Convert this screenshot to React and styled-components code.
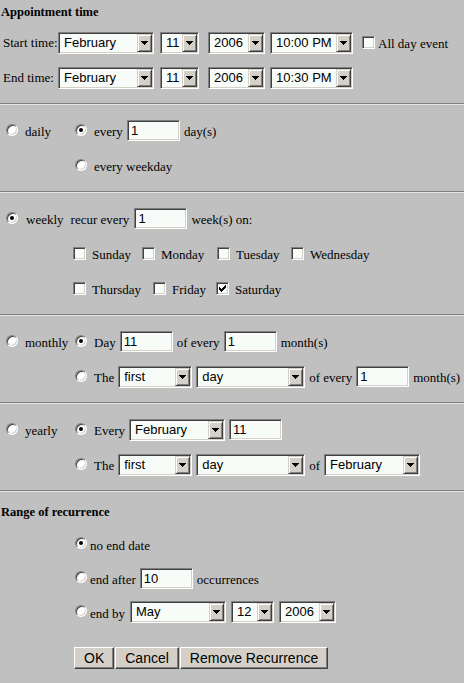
import React from 'react';
import styled, { createGlobalStyle } from 'styled-components';

const Global = createGlobalStyle`
  html, body { margin: 0; padding: 0; background: #c0c0c0; }
  body {
    font-family: "Liberation Serif", "Times New Roman", serif;
    font-size: 13px;
    color: #000;
  }
`;

const Page = styled.div`
  width: 464px;
  min-height: 683px;
  background: #c0c0c0;
  overflow: hidden;
`;

const Title = styled.div`
  height: ${(p) => p.$h || 25}px;
  display: flex;
  align-items: center;
  padding-left: 1px;
  font-weight: bold;
  font-size: 12.5px;
`;

const Row = styled.div`
  display: flex;
  align-items: center;
  height: ${(p) => p.$h || 35}px;
  padding-left: ${(p) => p.$pl || 0}px;
  gap: ${(p) => (p.$gap === undefined ? 4 : p.$gap)}px;
`;

const TimeLabel = styled.span`
  width: 58px;
  box-sizing: border-box;
  padding-left: 3px;
  white-space: nowrap;
`;

const Txt = styled.span`
  white-space: nowrap;
  padding-top: 3px;
  margin-left: ${(p) => p.$ml || 0}px;
`;

const Divider = styled.div`
  height: 0;
  margin: 8px 0;
  border-top: 1px solid #808080;
  border-bottom: 1px solid #e6e6e6;
`;

const sunken = `
  box-sizing: border-box;
  border-top: 1px solid #808080;
  border-left: 1px solid #808080;
  border-bottom: 1px solid #ffffff;
  border-right: 1px solid #ffffff;
  box-shadow: inset 1px 1px 0 #404040, inset -1px -1px 0 #d4d0c8;
`;

const SelectBox = styled.div`
  ${sunken}
  display: flex;
  flex: none;
  width: ${(p) => p.$w}px;
  height: 22px;
  padding: 1px;
  margin-left: ${(p) => p.$ml || 0}px;
  background: #f8fcf8;
`;

const SelectValue = styled.span`
  flex: 1;
  padding-left: 4px;
  font-family: "Liberation Sans", Arial, sans-serif;
  font-size: 13px;
  line-height: 18px;
  white-space: nowrap;
  overflow: hidden;
`;

const ArrowButton = styled.span`
  flex: none;
  width: 15px;
  height: 18px;
  box-sizing: border-box;
  background: #d4d0c8;
  border-top: 1px solid #d4d0c8;
  border-left: 1px solid #d4d0c8;
  border-right: 1px solid #404040;
  border-bottom: 1px solid #404040;
  box-shadow: inset 1px 1px 0 #ffffff, inset -1px -1px 0 #808080;
  display: flex;
  align-items: center;
  justify-content: center;
`;

const TextInput = styled.input`
  ${sunken}
  flex: none;
  width: ${(p) => p.$w || 53}px;
  height: 21px;
  margin: 0;
  margin-left: ${(p) => p.$ml || 0}px;
  padding: 0 0 0 3px;
  background: #f8fcf8;
  font-family: "Liberation Sans", Arial, sans-serif;
  font-size: 13px;
  color: #000;
  outline: none;
`;

const RadioDot = styled.span`
  position: relative;
  flex: none;
  width: 12px;
  height: 12px;
  box-sizing: border-box;
  border-radius: 50%;
  background: #ffffff;
  border: 1px solid;
  border-color: #808080 #ffffff #ffffff #808080;
  box-shadow: inset 1px 1px 0 #404040, inset -1px -1px 0 #d4d0c8;
  margin-right: ${(p) => (p.$mr === undefined ? 3 : p.$mr)}px;
  margin-bottom: 2px;
  &::after {
    content: '';
    display: ${(p) => (p.$checked ? 'block' : 'none')};
    position: absolute;
    left: 3px;
    top: 3px;
    width: 4px;
    height: 4px;
    border-radius: 50%;
    background: #000;
  }
`;

const CheckBoxBox = styled.span`
  ${sunken}
  flex: none;
  width: 13px;
  height: 13px;
  background: #f8fcf8;
  margin-left: ${(p) => p.$ml || 0}px;
  display: flex;
  align-items: center;
  justify-content: center;
`;

const Pattern = styled.div`
  display: grid;
  grid-template-columns: 75px 1fr;
`;

const Kind = styled.div`
  display: flex;
  align-items: center;
  height: 35px;
  padding-left: 6px;
  gap: 7px;
`;

const Options = styled.div`
  display: flex;
  flex-direction: column;
`;

const DayRow = styled.div`
  display: flex;
  align-items: center;
  height: 35px;
  padding-left: 73px;
`;

const DayItem = styled.span`
  display: flex;
  align-items: center;
  gap: 6px;
  flex: none;
  width: ${(p) => (p.$w ? `${p.$w}px` : 'auto')};
`;

const ButtonRow = styled.div`
  display: flex;
  gap: 1px;
  padding-left: 74px;
  margin-top: 18px;
`;

const Button = styled.button`
  height: 22px;
  box-sizing: border-box;
  padding: 0 9px;
  margin: 0;
  background: #d4d0c8;
  border: 1px solid;
  border-color: #ffffff #404040 #404040 #ffffff;
  box-shadow: inset -1px -1px 0 #808080, inset 1px 1px 0 #d4d0c8;
  font-family: "Liberation Sans", Arial, sans-serif;
  font-size: 14px;
  color: #000;
  line-height: 18px;
`;

const RangeRows = styled.div`
  margin-top: 3px;
`;

function Select({ value, w, ml }) {
  return (
    <SelectBox $w={w} $ml={ml}>
      <SelectValue>{value}</SelectValue>
      <ArrowButton>
        <svg width="7" height="4" viewBox="0 0 7 4" shapeRendering="crispEdges">
          <path d="M0 0h7v1H0zM1 1h5v1H1zM2 2h3v1H2zM3 3h1v1H3z" fill="#000" />
        </svg>
      </ArrowButton>
    </SelectBox>
  );
}

function CheckBox({ checked, ml }) {
  return (
    <CheckBoxBox $ml={ml}>
      {checked && (
        <svg width="7" height="7" viewBox="0 0 7 7" shapeRendering="crispEdges">
          <path d="M6 0h1v1H6zM5 1h1v1H5zM0 2h1v3H0zM1 3h1v3H1zM2 4h1v3H2zM3 3h1v3H3zM4 2h1v3H4zM5 1h1v3H5zM6 0h1v3H6z" fill="#000" />
        </svg>
      )}
    </CheckBoxBox>
  );
}

function TimeLine({ label, time, children }) {
  return (
    <Row $gap={0}>
      <TimeLabel>
        <Txt>{label}</Txt>
      </TimeLabel>
      <Select value="February" w={96} />
      <Select value="11" w={39} ml={6} />
      <Select value="2006" w={57} ml={9} />
      <Select value={time} w={83} ml={5} />
      {children}
    </Row>
  );
}

export default function App() {
  return (
    <Page>
      <Global />
      <Title>Appointment time</Title>
      <TimeLine label="Start time:" time="10:00 PM">
        <CheckBox ml={9} />
        <Txt $ml={3}>All day event</Txt>
      </TimeLine>
      <TimeLine label="End time:" time="10:30 PM" />

      <Divider />

      <Pattern>
        <Kind>
          <RadioDot $mr={0} />
          <Txt>daily</Txt>
        </Kind>
        <Options>
          <Row>
            <RadioDot $checked />
            <Txt>every</Txt>
            <TextInput readOnly value="1" />
            <Txt>day(s)</Txt>
          </Row>
          <Row>
            <RadioDot />
            <Txt>every weekday</Txt>
          </Row>
        </Options>
      </Pattern>

      <Divider />

      <Row $pl={6} $gap={0}>
        <RadioDot $checked $mr={8} />
        <Txt>weekly</Txt>
        <Txt $ml={7}>recur every</Txt>
        <TextInput readOnly value="1" $ml={5} />
        <Txt $ml={4}>week(s) on:</Txt>
      </Row>
      <DayRow>
        <DayItem $w={69}>
          <CheckBox />
          <Txt>Sunday</Txt>
        </DayItem>
        <DayItem $w={75}>
          <CheckBox />
          <Txt>Monday</Txt>
        </DayItem>
        <DayItem $w={74}>
          <CheckBox />
          <Txt>Tuesday</Txt>
        </DayItem>
        <DayItem>
          <CheckBox />
          <Txt>Wednesday</Txt>
        </DayItem>
      </DayRow>
      <DayRow>
        <DayItem $w={80}>
          <CheckBox />
          <Txt>Thursday</Txt>
        </DayItem>
        <DayItem $w={63}>
          <CheckBox />
          <Txt>Friday</Txt>
        </DayItem>
        <DayItem>
          <CheckBox checked />
          <Txt>Saturday</Txt>
        </DayItem>
      </DayRow>

      <Divider />

      <Pattern>
        <Kind>
          <RadioDot $mr={0} />
          <Txt>monthly</Txt>
        </Kind>
        <Options>
          <Row>
            <RadioDot $checked />
            <Txt>Day</Txt>
            <TextInput readOnly value="11" />
            <Txt>of every</Txt>
            <TextInput readOnly value="1" />
            <Txt>month(s)</Txt>
          </Row>
          <Row>
            <RadioDot />
            <Txt>The</Txt>
            <Select value="first" w={74} />
            <Select value="day" w={109} />
            <Txt>of every</Txt>
            <TextInput readOnly value="1" />
            <Txt>month(s)</Txt>
          </Row>
        </Options>
      </Pattern>

      <Divider />

      <Pattern>
        <Kind>
          <RadioDot $mr={0} />
          <Txt>yearly</Txt>
        </Kind>
        <Options>
          <Row>
            <RadioDot $checked />
            <Txt>Every</Txt>
            <Select value="February" w={96} />
            <TextInput readOnly value="11" />
          </Row>
          <Row>
            <RadioDot />
            <Txt>The</Txt>
            <Select value="first" w={74} />
            <Select value="day" w={109} />
            <Txt>of</Txt>
            <Select value="February" w={96} />
          </Row>
        </Options>
      </Pattern>

      <Divider />

      <Title $h={24}>Range of recurrence</Title>
      <RangeRows>
        <Row $h={34} $pl={75}>
          <RadioDot $checked $mr={-1} />
          <Txt>no end date</Txt>
        </Row>
        <Row $h={34} $pl={75}>
          <RadioDot $mr={-1} />
          <Txt>end after</Txt>
          <TextInput readOnly value="10" />
          <Txt>occurrences</Txt>
        </Row>
        <Row $h={34} $pl={75}>
          <RadioDot $mr={-1} />
          <Txt>end by</Txt>
          <Select value="May" w={96} ml={1} />
          <Select value="12" w={43} ml={1} />
          <Select value="2006" w={57} ml={1} />
        </Row>
      </RangeRows>

      <ButtonRow>
        <Button>OK</Button>
        <Button>Cancel</Button>
        <Button>Remove Recurrence</Button>
      </ButtonRow>
    </Page>
  );
}
